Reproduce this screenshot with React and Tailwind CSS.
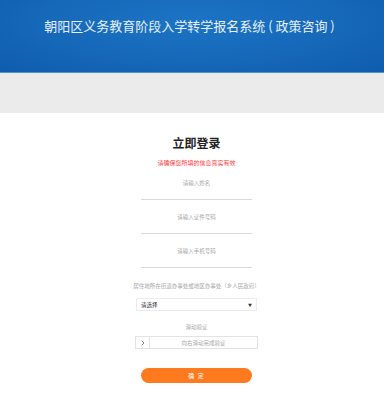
import { ChevronRight } from 'lucide-react';

const cjk = { fontFamily: '"Noto Sans CJK SC", "Noto Sans", sans-serif' };

function LineInput({ placeholder }) {
  return (
    <div className="h-[34px] w-[111px] border-b border-[#d9d9d9] flex items-center justify-center">
      <input
        className="w-full bg-transparent text-center text-[5.5px] leading-[8px] text-[#333] outline-none placeholder:text-[#a6a6a6]"
        placeholder={placeholder}
      />
    </div>
  );
}

export default function App() {
  return (
    <div className="w-[384px] h-[400px] bg-white overflow-hidden" style={cjk}>
      {/* 顶部蓝色标题栏 */}
      <div className="h-[73px] bg-[radial-gradient(ellipse_at_50%_30%,#1c74c4_0%,#1668b9_55%,#0f5cae_100%)] border-b border-[#4a91d4] flex justify-center pt-[16px]">
        <h1 className="text-[13px] leading-[20px] text-[#e8f0fa] pr-[5px]">
          朝阳区义务教育阶段入学转学报名系统 ( 政策咨询 )
        </h1>
      </div>

      {/* 灰色分隔条 */}
      <div className="h-[40px] bg-[#ebebeb]" />

      {/* 登录表单 */}
      <div className="flex flex-col items-center pl-[9px]">
        <h2 className="mt-[23px] text-[12px] leading-[14px] font-bold text-[#222]">立即登录</h2>
        <p className="mt-[9px] text-[6px] leading-[7px] text-[#ff3b3b]">请确保您所填的信息真实有效</p>

        <LineInput placeholder="请输入姓名" />
        <LineInput placeholder="请输入证件号码" />
        <LineInput placeholder="请输入手机号码" />

        <p className="mt-[14px] text-[5.5px] leading-[8px] text-[#a6a6a6]">
          居住地所在街道办事处或地区办事处（乡人民政府）
        </p>

        <div className="mt-[8px] w-[121px] h-[13px] border border-[#ececec] flex items-center justify-between px-[4px]">
          <span className="text-[5.5px] leading-[8px] text-[#333]">请选择</span>
          <span className="text-[4px] leading-[6px] text-[#333]">▼</span>
        </div>

        <p className="mt-[12px] text-[5.5px] leading-[8px] text-[#a6a6a6]">滑动验证</p>

        <div className="mt-[5px] w-[123px] h-[13px] border border-[#e3e3e3] flex items-stretch">
          <div className="w-[14px] border-r border-[#e3e3e3] flex items-center justify-center">
            <ChevronRight size={8} strokeWidth={2} color="#444" />
          </div>
          <div className="flex-1 flex items-center justify-center text-[5.5px] leading-[8px] text-[#a6a6a6]">
            向右滑动完成验证
          </div>
        </div>

        <button className="mt-[19px] w-[111px] h-[15px] rounded-full bg-[#ff7a1f] text-white text-[6px] leading-[8px] tracking-[1px]">
          确 定
        </button>
      </div>
    </div>
  );
}
